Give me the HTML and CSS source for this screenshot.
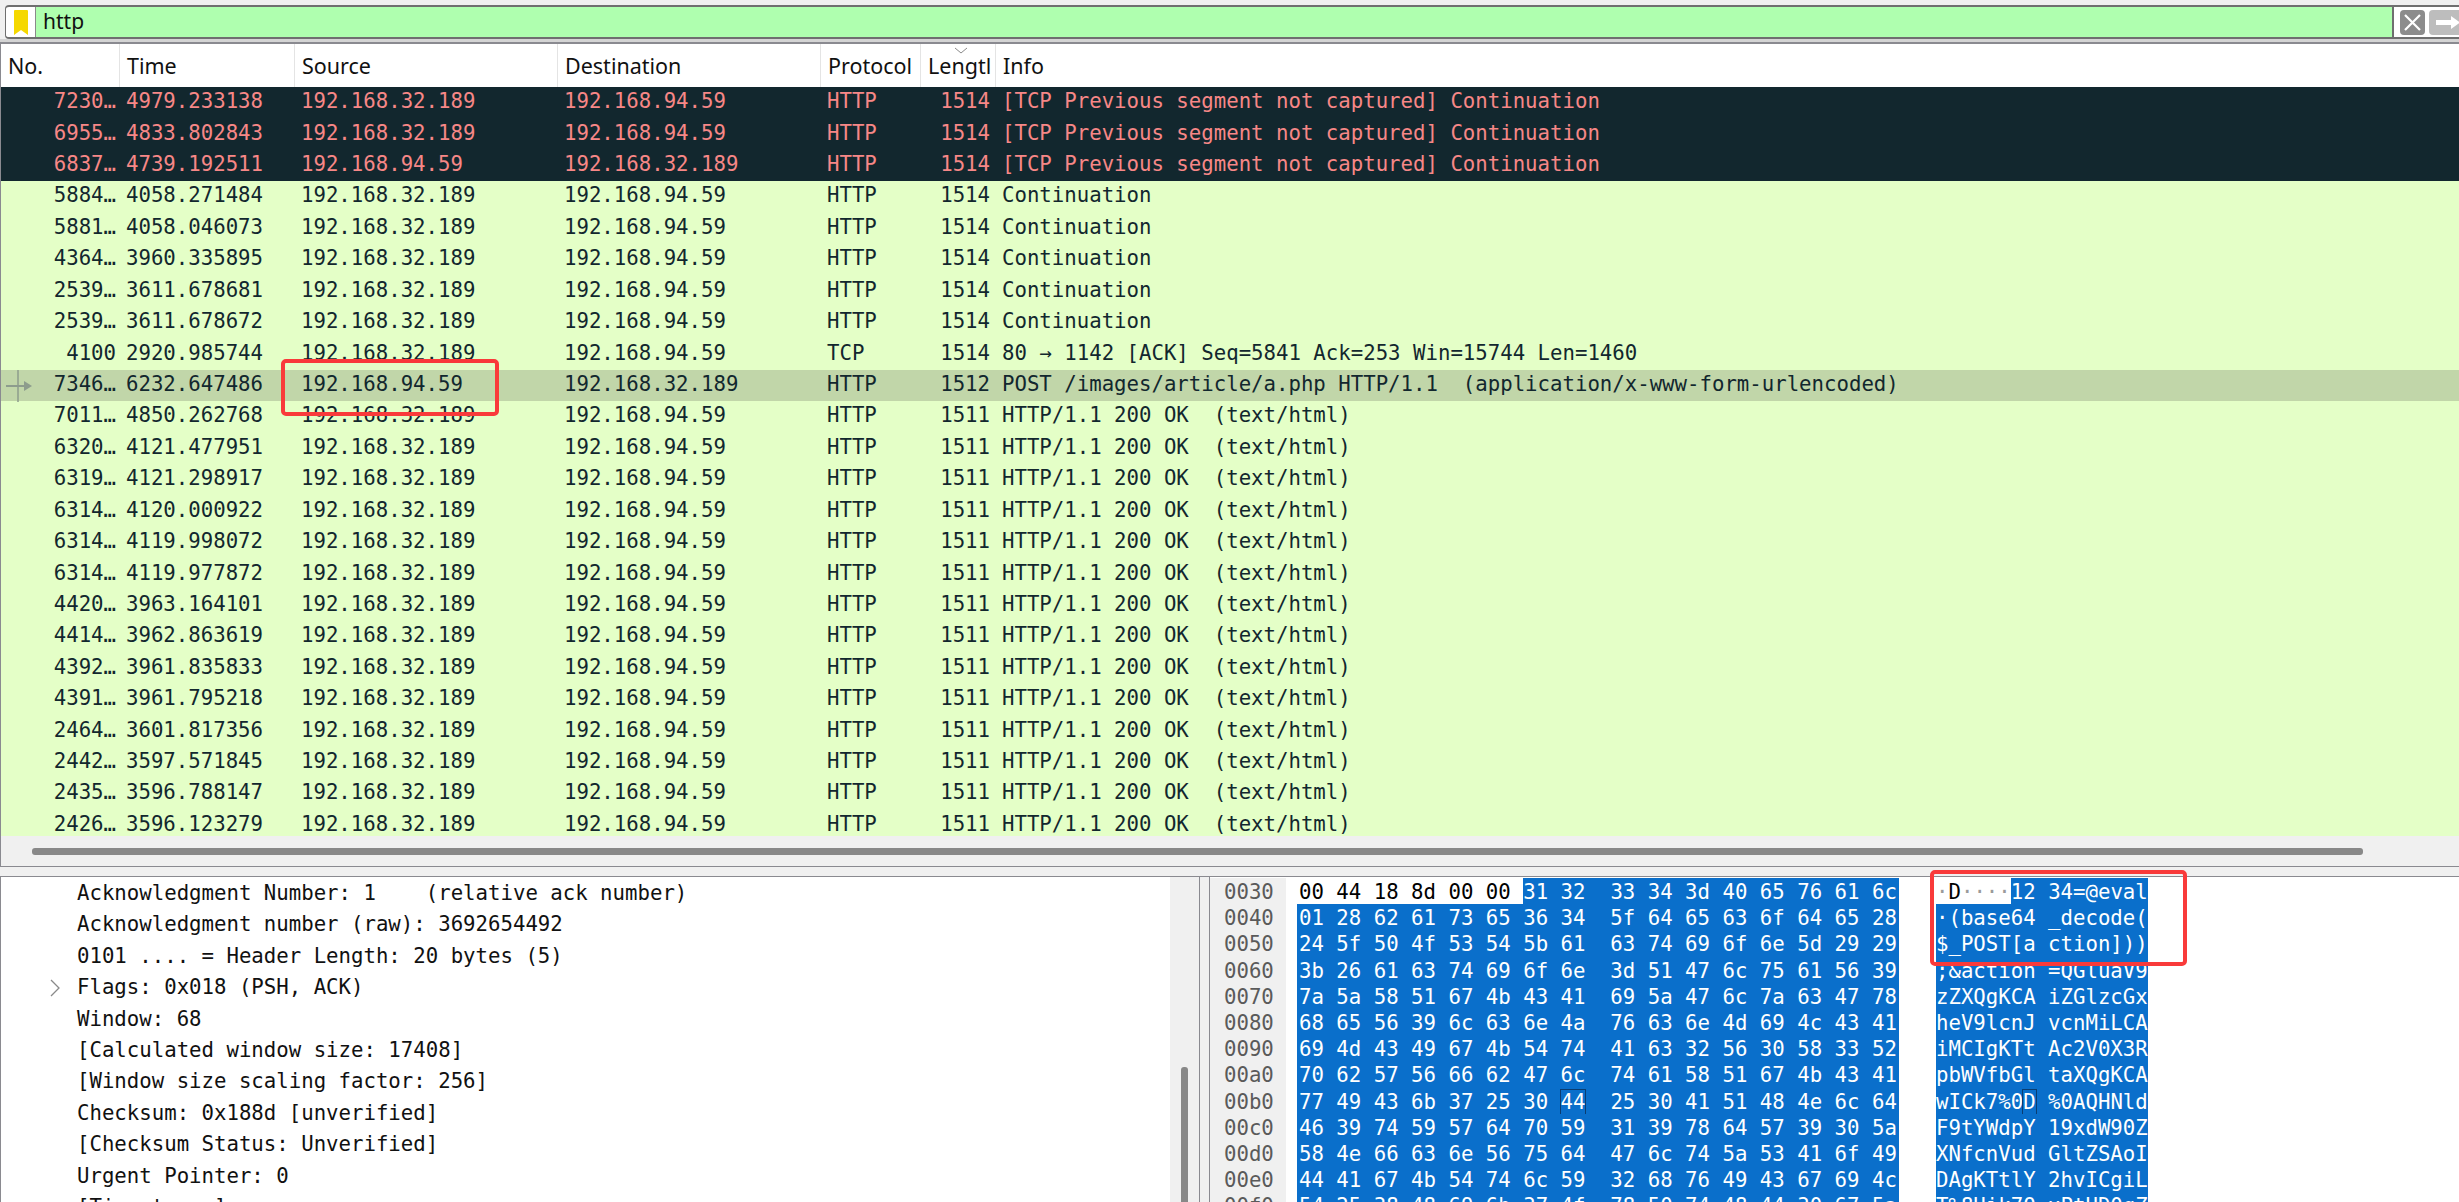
FILE: index.html
```html
<!DOCTYPE html>
<html lang="en">
<head>
    <meta charset="UTF-8">
    <title>Wireshark capture</title>
    <link rel="stylesheet" href="styles.css">
</head>
<body>
    <div class="filter-bar">
        <div class="filter-box">
            <div class="bookmark">
                <svg width="14" height="25" viewBox="0 0 14 25"><path d="M0 1 Q0 0 1 0 H13 Q14 0 14 1 V25 L7 20 L0 25 Z" fill="#f5d800"/></svg>
            </div>
            <div class="filter-input">http</div>
            <div class="filter-actions">
                <div class="clear-btn">
                    <svg width="25" height="25" viewBox="0 0 25 25"><path d="M5 5 L20 20 M20 5 L5 20" stroke="#fff" stroke-width="2.2"/></svg>
                </div>
                <div class="apply-btn">
                    <svg width="32" height="25" viewBox="0 0 32 25"><path d="M7 10 H22 V6 L31 12.5 L22 19 V15 H7 Z" fill="#fff"/></svg>
                </div>
            </div>
        </div>
    </div>

    <div class="packet-pane">
        <div class="packet-head">
            <span class="head-cell">No.</span>
            <span class="head-cell">Time</span>
            <span class="head-cell">Source</span>
            <span class="head-cell">Destination</span>
            <span class="head-cell">Protocol</span>
            <span class="head-cell sort-col">Lengtl<svg class="sort-mark" width="14" height="7" viewBox="0 0 14 7"><path d="M1 1 L7 6 L13 1" fill="none" stroke="#8a8a8a" stroke-width="1"/></svg></span>
            <span class="head-cell">Info</span>
        </div>
        <div class="packet-list">
            <div class="pkt bad"><span class="num">7230…</span><span>4979.233138</span><span>192.168.32.189</span><span>192.168.94.59</span><span>HTTP</span><span class="len">1514</span><span>[TCP Previous segment not captured] Continuation</span></div>
            <div class="pkt bad"><span class="num">6955…</span><span>4833.802843</span><span>192.168.32.189</span><span>192.168.94.59</span><span>HTTP</span><span class="len">1514</span><span>[TCP Previous segment not captured] Continuation</span></div>
            <div class="pkt bad"><span class="num">6837…</span><span>4739.192511</span><span>192.168.94.59</span><span>192.168.32.189</span><span>HTTP</span><span class="len">1514</span><span>[TCP Previous segment not captured] Continuation</span></div>
            <div class="pkt"><span class="num">5884…</span><span>4058.271484</span><span>192.168.32.189</span><span>192.168.94.59</span><span>HTTP</span><span class="len">1514</span><span>Continuation</span></div>
            <div class="pkt"><span class="num">5881…</span><span>4058.046073</span><span>192.168.32.189</span><span>192.168.94.59</span><span>HTTP</span><span class="len">1514</span><span>Continuation</span></div>
            <div class="pkt"><span class="num">4364…</span><span>3960.335895</span><span>192.168.32.189</span><span>192.168.94.59</span><span>HTTP</span><span class="len">1514</span><span>Continuation</span></div>
            <div class="pkt"><span class="num">2539…</span><span>3611.678681</span><span>192.168.32.189</span><span>192.168.94.59</span><span>HTTP</span><span class="len">1514</span><span>Continuation</span></div>
            <div class="pkt"><span class="num">2539…</span><span>3611.678672</span><span>192.168.32.189</span><span>192.168.94.59</span><span>HTTP</span><span class="len">1514</span><span>Continuation</span></div>
            <div class="pkt"><span class="num">4100</span><span>2920.985744</span><span>192.168.32.189</span><span>192.168.94.59</span><span>TCP</span><span class="len">1514</span><span>80 → 1142 [ACK] Seq=5841 Ack=253 Win=15744 Len=1460</span></div>
            <div class="pkt selected">
                <svg class="related-mark" width="32" height="32" viewBox="0 0 32 32"><path d="M17 0 V32" stroke="#8d9c8d" stroke-width="1.5"/><path d="M5 16 H24" stroke="#8d9c8d" stroke-width="2"/><path d="M23 11 L31 16 L23 21 Z" fill="#8d9c8d"/></svg>
                <span class="num">7346…</span><span>6232.647486</span><span>192.168.94.59</span><span>192.168.32.189</span><span>HTTP</span><span class="len">1512</span><span>POST /images/article/a.php HTTP/1.1  (application/x-www-form-urlencoded)</span>
                <div class="callout source-callout"></div>
            </div>
            <div class="pkt"><span class="num">7011…</span><span>4850.262768</span><span>192.168.32.189</span><span>192.168.94.59</span><span>HTTP</span><span class="len">1511</span><span>HTTP/1.1 200 OK  (text/html)</span></div>
            <div class="pkt"><span class="num">6320…</span><span>4121.477951</span><span>192.168.32.189</span><span>192.168.94.59</span><span>HTTP</span><span class="len">1511</span><span>HTTP/1.1 200 OK  (text/html)</span></div>
            <div class="pkt"><span class="num">6319…</span><span>4121.298917</span><span>192.168.32.189</span><span>192.168.94.59</span><span>HTTP</span><span class="len">1511</span><span>HTTP/1.1 200 OK  (text/html)</span></div>
            <div class="pkt"><span class="num">6314…</span><span>4120.000922</span><span>192.168.32.189</span><span>192.168.94.59</span><span>HTTP</span><span class="len">1511</span><span>HTTP/1.1 200 OK  (text/html)</span></div>
            <div class="pkt"><span class="num">6314…</span><span>4119.998072</span><span>192.168.32.189</span><span>192.168.94.59</span><span>HTTP</span><span class="len">1511</span><span>HTTP/1.1 200 OK  (text/html)</span></div>
            <div class="pkt"><span class="num">6314…</span><span>4119.977872</span><span>192.168.32.189</span><span>192.168.94.59</span><span>HTTP</span><span class="len">1511</span><span>HTTP/1.1 200 OK  (text/html)</span></div>
            <div class="pkt"><span class="num">4420…</span><span>3963.164101</span><span>192.168.32.189</span><span>192.168.94.59</span><span>HTTP</span><span class="len">1511</span><span>HTTP/1.1 200 OK  (text/html)</span></div>
            <div class="pkt"><span class="num">4414…</span><span>3962.863619</span><span>192.168.32.189</span><span>192.168.94.59</span><span>HTTP</span><span class="len">1511</span><span>HTTP/1.1 200 OK  (text/html)</span></div>
            <div class="pkt"><span class="num">4392…</span><span>3961.835833</span><span>192.168.32.189</span><span>192.168.94.59</span><span>HTTP</span><span class="len">1511</span><span>HTTP/1.1 200 OK  (text/html)</span></div>
            <div class="pkt"><span class="num">4391…</span><span>3961.795218</span><span>192.168.32.189</span><span>192.168.94.59</span><span>HTTP</span><span class="len">1511</span><span>HTTP/1.1 200 OK  (text/html)</span></div>
            <div class="pkt"><span class="num">2464…</span><span>3601.817356</span><span>192.168.32.189</span><span>192.168.94.59</span><span>HTTP</span><span class="len">1511</span><span>HTTP/1.1 200 OK  (text/html)</span></div>
            <div class="pkt"><span class="num">2442…</span><span>3597.571845</span><span>192.168.32.189</span><span>192.168.94.59</span><span>HTTP</span><span class="len">1511</span><span>HTTP/1.1 200 OK  (text/html)</span></div>
            <div class="pkt"><span class="num">2435…</span><span>3596.788147</span><span>192.168.32.189</span><span>192.168.94.59</span><span>HTTP</span><span class="len">1511</span><span>HTTP/1.1 200 OK  (text/html)</span></div>
            <div class="pkt"><span class="num">2426…</span><span>3596.123279</span><span>192.168.32.189</span><span>192.168.94.59</span><span>HTTP</span><span class="len">1511</span><span>HTTP/1.1 200 OK  (text/html)</span></div>
        </div>
        <div class="hscroll"><div class="hscroll-thumb"></div></div>
    </div>

    <div class="lower-split">
        <div class="detail-pane">
            <div class="detail-tree">
                <div class="tree-row">Acknowledgment Number: 1    (relative ack number)</div>
                <div class="tree-row">Acknowledgment number (raw): 3692654492</div>
                <div class="tree-row">0101 .... = Header Length: 20 bytes (5)</div>
                <div class="tree-row"><svg class="chevron" width="10" height="18" viewBox="0 0 10 18"><path d="M1 1 L9 9 L1 17" fill="none" stroke="#8a8a8a" stroke-width="1.3"/></svg>Flags: 0x018 (PSH, ACK)</div>
                <div class="tree-row">Window: 68</div>
                <div class="tree-row">[Calculated window size: 17408]</div>
                <div class="tree-row">[Window size scaling factor: 256]</div>
                <div class="tree-row">Checksum: 0x188d [unverified]</div>
                <div class="tree-row">[Checksum Status: Unverified]</div>
                <div class="tree-row">Urgent Pointer: 0</div>
                <div class="tree-row">[Timestamps]</div>
            </div>
            <div class="vscroll"><div class="vscroll-thumb"></div></div>
        </div>
        <div class="splitter"></div>
        <div class="hex-pane">
            <div class="hex-row"><span class="offset">0030</span><span class="hex"><span class="plain">00 44 18 8d 00 00 </span>31 32  33 34 3d 40 65 76 61 6c</span><span class="ascii"><span class="plain"><span class="dot">·</span>D<span class="dot">····</span></span>12 34=@eval</span></div>
            <div class="hex-row"><span class="offset">0040</span><span class="hex">01 28 62 61 73 65 36 34  5f 64 65 63 6f 64 65 28</span><span class="ascii">·(base64 _decode(</span></div>
            <div class="hex-row"><span class="offset">0050</span><span class="hex">24 5f 50 4f 53 54 5b 61  63 74 69 6f 6e 5d 29 29</span><span class="ascii">$_POST[a ction]))</span></div>
            <div class="hex-row"><span class="offset">0060</span><span class="hex">3b 26 61 63 74 69 6f 6e  3d 51 47 6c 75 61 56 39</span><span class="ascii">;&amp;action =QGluaV9</span></div>
            <div class="hex-row"><span class="offset">0070</span><span class="hex">7a 5a 58 51 67 4b 43 41  69 5a 47 6c 7a 63 47 78</span><span class="ascii">zZXQgKCA iZGlzcGx</span></div>
            <div class="hex-row"><span class="offset">0080</span><span class="hex">68 65 56 39 6c 63 6e 4a  76 63 6e 4d 69 4c 43 41</span><span class="ascii">heV9lcnJ vcnMiLCA</span></div>
            <div class="hex-row"><span class="offset">0090</span><span class="hex">69 4d 43 49 67 4b 54 74  41 63 32 56 30 58 33 52</span><span class="ascii">iMCIgKTt Ac2V0X3R</span></div>
            <div class="hex-row"><span class="offset">00a0</span><span class="hex">70 62 57 56 66 62 47 6c  74 61 58 51 67 4b 43 41</span><span class="ascii">pbWVfbGl taXQgKCA</span></div>
            <div class="hex-row"><span class="offset">00b0</span><span class="hex">77 49 43 6b 37 25 30 <span class="hover-byte">44</span>  25 30 41 51 48 4e 6c 64</span><span class="ascii">wICk7%0<span class="hover-byte">D</span> %0AQHNld</span></div>
            <div class="hex-row"><span class="offset">00c0</span><span class="hex">46 39 74 59 57 64 70 59  31 39 78 64 57 39 30 5a</span><span class="ascii">F9tYWdpY 19xdW90Z</span></div>
            <div class="hex-row"><span class="offset">00d0</span><span class="hex">58 4e 66 63 6e 56 75 64  47 6c 74 5a 53 41 6f 49</span><span class="ascii">XNfcnVud GltZSAoI</span></div>
            <div class="hex-row"><span class="offset">00e0</span><span class="hex">44 41 67 4b 54 74 6c 59  32 68 76 49 43 67 69 4c</span><span class="ascii">DAgKTtlY 2hvICgiL</span></div>
            <div class="hex-row"><span class="offset">00f0</span><span class="hex">54 25 38 48 69 6b 37 4f  78 50 74 48 44 30 67 5a</span><span class="ascii">T%8Hik7O xPtHD0gZ</span></div>
        </div>
        <div class="callout ascii-callout"></div>
    </div>
</body>
</html>
```

FILE: styles.css
```css
/* ===== BASE ===== */
* {
    margin: 0;
    padding: 0;
    box-sizing: border-box;
}

body {
    height: 100vh;
    display: flex;
    flex-direction: column;
    overflow: hidden;
    background: #f0f0f0;
    color: #12272e;
    font-family: "DejaVu Sans Mono", monospace;
    font-size: 20.7px;
}

/* ===== FILTER BAR ===== */
.filter-bar {
    height: 42px;
    padding: 5px 0 3px;
    background: linear-gradient(#f0f0f0 39px, #d4d4d4 39px);
}

.filter-box {
    height: 34px;
    margin-left: 5px;
    display: flex;
    background: #fff;
    border: solid #6f6f6f;
    border-width: 2px 0 2px 1px;
    border-radius: 4px 0 0 4px;
}

.bookmark {
    width: 30px;
    padding: 3px 0 0 8px;
    border-right: 1px solid #8a8a8a;
}

.filter-input {
    flex: 1;
    padding-left: 7px;
    background: #afffaf;
    color: #111;
    font-family: "Noto Sans", sans-serif;
    font-size: 21px;
    line-height: 29px;
}

.filter-actions {
    width: 67px;
    display: flex;
    gap: 4px;
    padding: 3px 0 0 6px;
    border-left: 2px solid #6f6f6f;
    overflow: hidden;
}

.clear-btn,
.apply-btn {
    flex: none;
    height: 25px;
    border-radius: 4px;
}

.clear-btn {
    width: 25px;
    background: #8c8c8c;
}

.apply-btn {
    width: 36px;
    background: #bdbdbd;
}

/* ===== PACKET LIST ===== */
.packet-pane {
    border-top: 2px solid #8a8a90;
    border-left: 1px solid #8a8a90;
    border-bottom: 1px solid #8a8a90;
}

.packet-head,
.pkt {
    display: grid;
    grid-template-columns: 119px 175px 263px 263px 100px 75px 1fr;
}

.packet-head {
    height: 43px;
    background: #fff;
}

.head-cell {
    position: relative;
    padding-left: 7px;
    border-right: 1px solid #e4e4e4;
    overflow: hidden;
    color: #111;
    font-family: "Noto Sans", sans-serif;
    font-size: 21.5px;
    line-height: 43px;
    white-space: nowrap;
}

.head-cell:last-child {
    border-right: none;
}

.sort-mark {
    position: absolute;
    left: 33px;
    top: 3px;
}

.packet-list {
    height: 749px;
    overflow: hidden;
}

.pkt {
    position: relative;
    height: 31.43px;
    padding-bottom: 3px;
    align-items: center;
    background: #e4ffc7;
    white-space: pre;
}

.pkt span {
    padding-left: 6px;
}

.pkt .num {
    padding: 0 4px 0 0;
    text-align: right;
}

.pkt .len {
    padding: 0 6px 0 0;
    text-align: right;
}

.pkt.bad {
    background: #12272e;
    color: #f78787;
}

.pkt.selected {
    z-index: 1;
    background: #c1d6a9;
}

.related-mark {
    position: absolute;
    left: 0;
    top: 0;
}

/* red notes drawn over the capture */
.callout {
    position: absolute;
    border: 4px solid #f93a3a;
    border-radius: 5px;
}

.source-callout {
    left: 280px;
    top: -11px;
    width: 218px;
    height: 57px;
}

.ascii-callout {
    left: 1930px;
    top: -7px;
    width: 257px;
    height: 96px;
}

.hscroll {
    height: 30px;
    padding: 12px 96px 0 31px;
}

.hscroll-thumb {
    height: 7px;
    background: #888;
    border-radius: 3px;
}

/* ===== LOWER PANES ===== */
.lower-split {
    position: relative;
    flex: 1;
    min-height: 0;
    display: flex;
    margin-top: 9px;
    border-top: 1px solid #8a8a90;
}

.detail-pane {
    width: 1200px;
    display: flex;
    background: #fff;
    border-left: 1px solid #8a8a90;
    border-right: 1px solid #8a8a90;
}

.detail-tree {
    flex: 1;
    padding-top: 1px;
    color: #111;
    overflow: hidden;
}

.tree-row {
    position: relative;
    height: 31.4px;
    padding-left: 76px;
    line-height: 31.4px;
    white-space: pre;
}

.chevron {
    position: absolute;
    left: 49px;
    top: 7px;
}

.vscroll {
    width: 29px;
    padding: 190px 0 0 11px;
    background: #f0f0f0;
}

.vscroll-thumb {
    width: 7px;
    height: 200px;
    background: #888;
    border-radius: 3px 3px 0 0;
}

.splitter {
    width: 9px;
}

.hex-pane {
    flex: 1;
    padding-top: 1px;
    background: #fff;
    border-left: 1px solid #8a8a90;
    overflow: hidden;
}

.hex-row {
    height: 26.2px;
    display: flex;
    line-height: 29px;
    white-space: pre;
    background: linear-gradient(90deg, #f0f0f0 76px, #fff 76px);
}

.offset {
    width: 87px;
    padding-left: 14px;
    color: #5a5a5a;
}

.hex {
    width: 602px;
    padding-left: 2px;
    background: #0a6fcb;
    color: #fff;
}

.ascii {
    width: 212px;
    margin-left: 37px;
    background: #0a6fcb;
    color: #fff;
}

.plain {
    display: inline-block;
    background: #fff;
    color: #000;
}

.hex .plain {
    margin-left: -2px;
    padding-left: 2px;
}

.dot {
    color: #9a9a9a;
}

.hover-byte {
    outline: 1px solid #0b3d70;
}
```
